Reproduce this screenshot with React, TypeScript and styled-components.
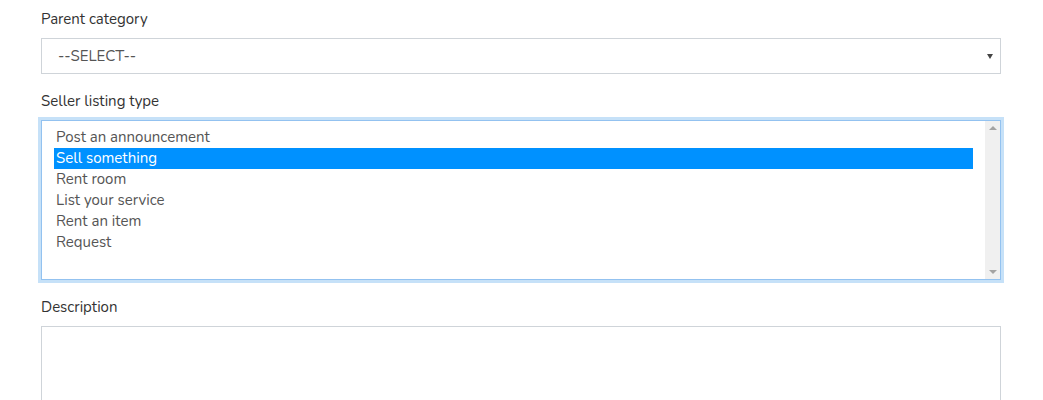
import React from "react";
import styled, { createGlobalStyle } from "styled-components";

const Global = createGlobalStyle`
  html, body { margin: 0; padding: 0; background: #fff; }
  body { font-family: "Nunito", "Lato", "Open Sans", sans-serif; }
`;

const Form = styled.div`
  width: 960px;
  padding: 9px 0 0 41px;
`;

const Group = styled.div<{ $gap: number }>`
  margin-bottom: ${(p) => p.$gap}px;
`;

const Label = styled.label`
  display: block;
  font-size: 15px;
  line-height: 20px;
  color: #333;
  margin-bottom: 9px;
`;

const SelectBox = styled.div`
  box-sizing: border-box;
  height: 36px;
  border: 1px solid #cfd4d9;
  display: flex;
  align-items: center;
  justify-content: space-between;
  padding: 0 7px 0 16px;
  font-size: 15px;
  color: #555;
`;

const Caret = styled.span`
  width: 0;
  height: 0;
  border-left: 3px solid transparent;
  border-right: 3px solid transparent;
  border-top: 5px solid #444;
  margin-top: 1px;
`;

const ListBox = styled.div`
  box-sizing: border-box;
  height: 160px;
  border: 1px solid #93c2f0;
  box-shadow: 0 0 0 3px #c6e1f8;
  display: flex;
`;

const Options = styled.div`
  flex: 1;
  padding: 6px 12px;
`;

const Option = styled.div<{ $selected?: boolean }>`
  height: 21px;
  line-height: 21px;
  font-size: 15px;
  padding-left: 2px;
  color: ${(p) => (p.$selected ? "#fff" : "#555")};
  background: ${(p) => (p.$selected ? "#0091ff" : "transparent")};
`;

const Scrollbar = styled.div`
  width: 15px;
  background: #f0f0f0;
  display: flex;
  flex-direction: column;
  justify-content: space-between;
  align-items: center;
  padding: 5px 0;
`;

const Arrow = styled.span<{ $down?: boolean }>`
  width: 0;
  height: 0;
  border-left: 4px solid transparent;
  border-right: 4px solid transparent;
  ${(p) =>
    p.$down
      ? "border-top: 4px solid #a3a3a3;"
      : "border-bottom: 4px solid #a3a3a3;"}
`;

const TextArea = styled.div`
  box-sizing: border-box;
  height: 120px;
  border: 1px solid #cfd4d9;
`;

const items = [
  "Post an announcement",
  "Sell something",
  "Rent room",
  "List your service",
  "Rent an item",
  "Request",
];

export default function App() {
  return (
    <>
      <Global />
      <Form>
        <Group $gap={17}>
          <Label>Parent category</Label>
          <SelectBox>
            <span>--SELECT--</span>
            <Caret />
          </SelectBox>
        </Group>
        <Group $gap={17}>
          <Label>Seller listing type</Label>
          <ListBox>
            <Options>
              {items.map((t) => (
                <Option key={t} $selected={t === "Sell something"}>
                  {t}
                </Option>
              ))}
            </Options>
            <Scrollbar>
              <Arrow />
              <Arrow $down />
            </Scrollbar>
          </ListBox>
        </Group>
        <Group $gap={0}>
          <Label>Description</Label>
          <TextArea />
        </Group>
      </Form>
    </>
  );
}
